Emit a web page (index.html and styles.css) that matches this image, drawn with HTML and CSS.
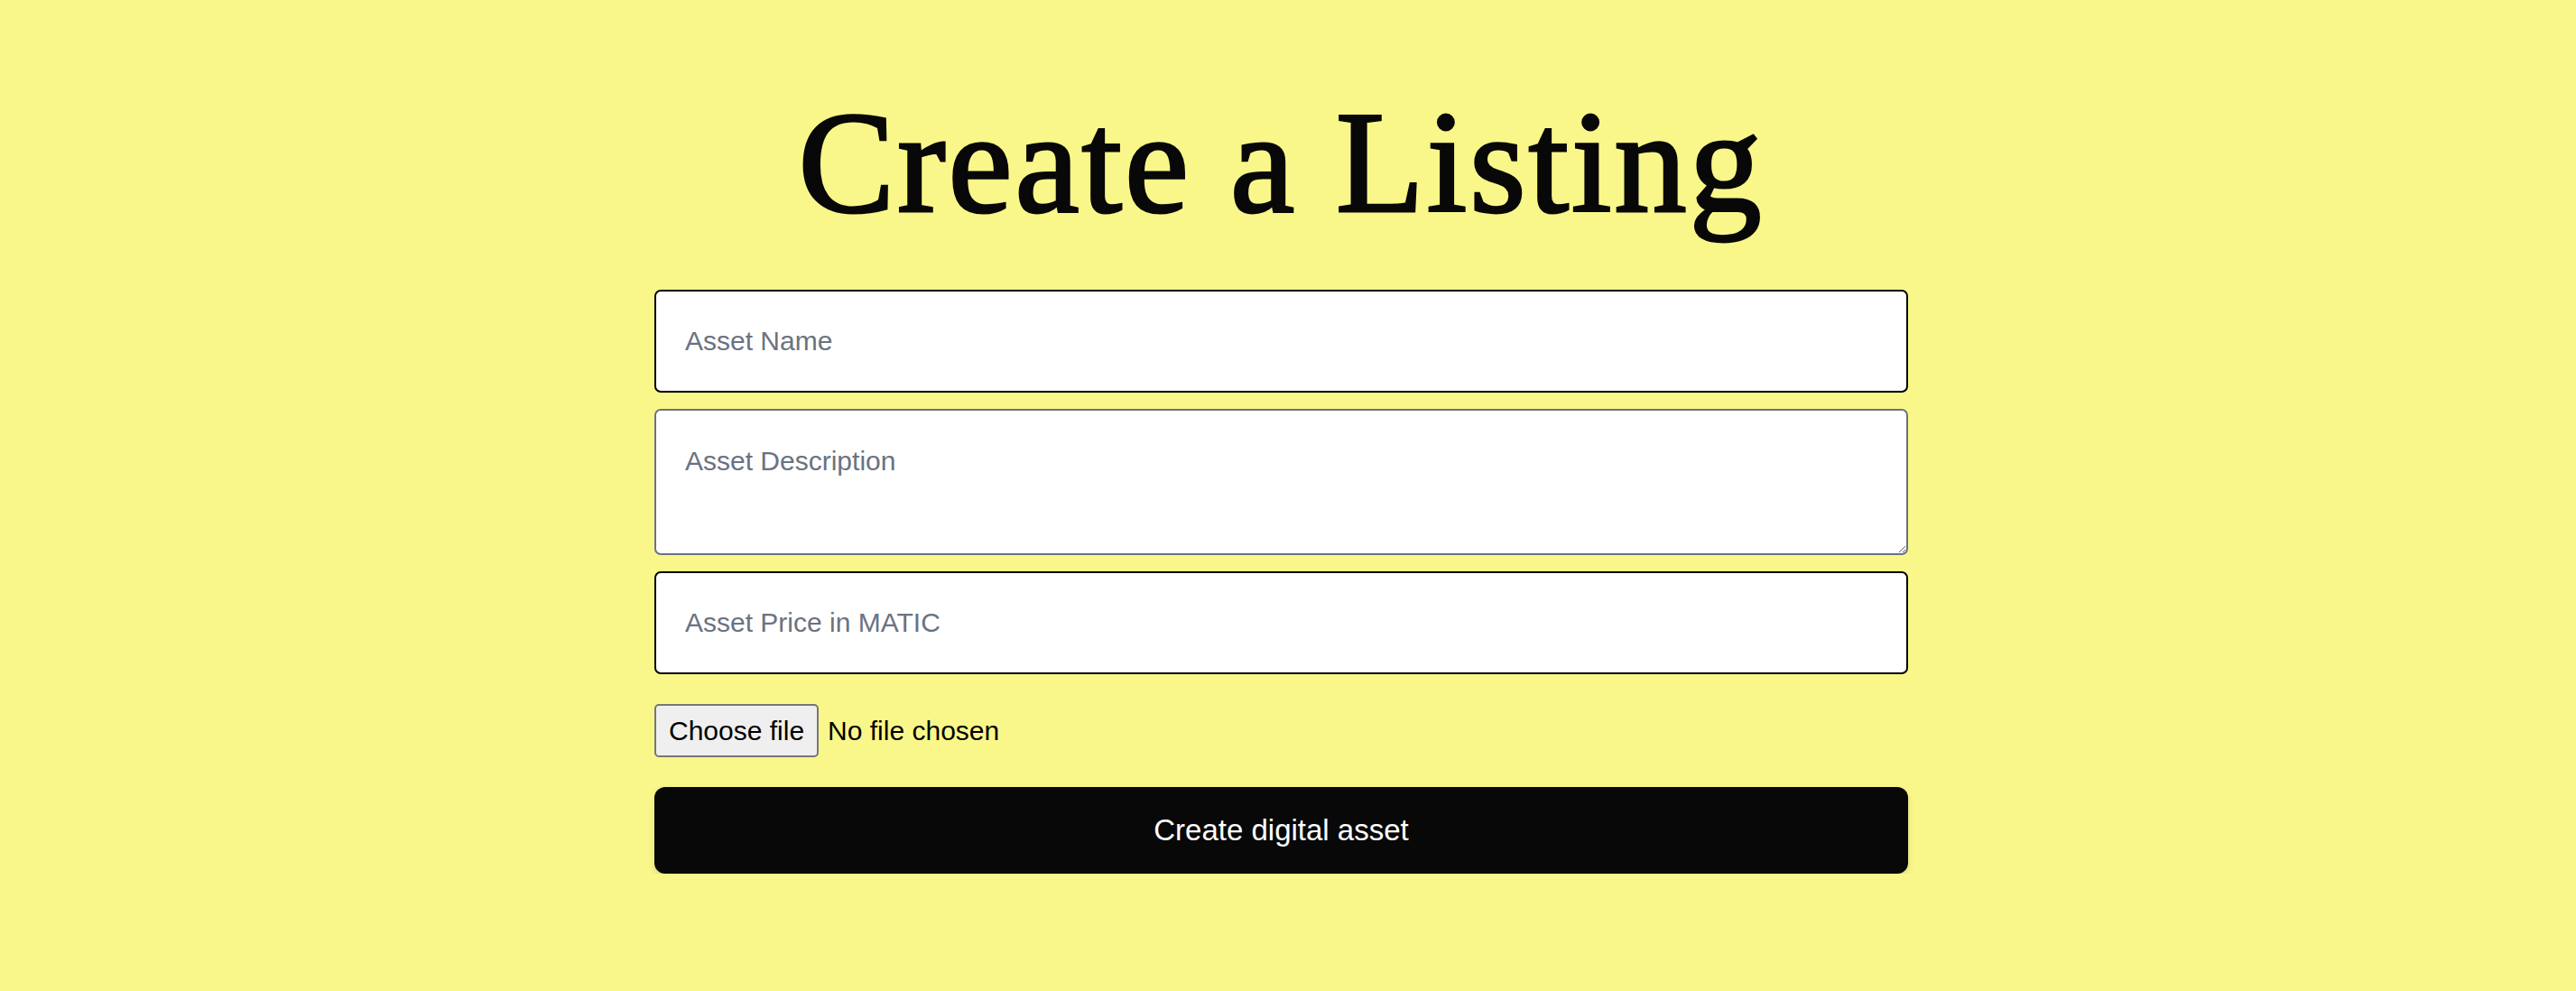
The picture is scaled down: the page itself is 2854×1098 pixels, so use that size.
FILE: index.html
```html
<!DOCTYPE html>
<html lang="en">
<head>
<meta charset="utf-8">
<title>Create a Listing</title>
<link rel="stylesheet" href="styles.css">
</head>
<body>
<main class="page">
  <h1 class="title">Create a Listing</h1>
  <form class="listing-form">
    <input class="field field-dark" type="text" placeholder="Asset Name">
    <textarea class="field field-area" placeholder="Asset Description"></textarea>
    <input class="field field-dark" type="text" placeholder="Asset Price in MATIC">
    <div class="file-row">
      <button type="button" class="file-btn">Choose file</button>
      <span class="file-label">No file chosen</span>
    </div>
    <button type="button" class="submit-btn">Create digital asset</button>
  </form>
</main>
</body>
</html>
```

FILE: styles.css
```css
html, body {
  margin: 0;
  padding: 0;
}

html {
  background: #f9f78a;
}

body {
  font-family: "Liberation Sans", Arial, sans-serif;
  color: #080808;
  padding-right: 15px;
}

.page {
  padding-top: 100px;
  display: flex;
  flex-direction: column;
  align-items: center;
}

.title {
  margin: 0;
  font-family: "Liberation Serif", "Times New Roman", serif;
  font-weight: 400;
  font-size: 160px;
  line-height: 160px;
  letter-spacing: 3px;
  color: #080808;
  -webkit-text-stroke: 3px #080808;
}

.listing-form {
  width: 1389px;
  margin-top: 61px;
  display: flex;
  flex-direction: column;
}

.field {
  box-sizing: border-box;
  width: 100%;
  background: #fff;
  border-radius: 7px;
  font-family: "Liberation Sans", Arial, sans-serif;
  font-size: 30px;
  color: #111;
  outline: none;
  margin: 0;
}

.field::placeholder {
  color: #6b7280;
  opacity: 1;
}

.field-dark {
  height: 114px;
  border: 2px solid #000;
  padding: 0 32px;
}

.field-area {
  height: 162px;
  border: 2px solid #6b7280;
  padding: 38px 32px 0;
  line-height: 36px;
  margin: 18px 0;
  resize: vertical;
  display: block;
}

.file-row {
  margin-top: 33px;
  display: flex;
  align-items: center;
  gap: 10px;
}

.file-btn {
  box-sizing: border-box;
  height: 59px;
  padding: 0 14px;
  background: #efefef;
  border: 2px solid #767676;
  border-radius: 5px;
  font-family: "Liberation Sans", Arial, sans-serif;
  font-size: 30px;
  color: #000;
  margin: 0;
}

.file-label {
  font-size: 30px;
  color: #000;
}

.submit-btn {
  margin-top: 33px;
  height: 96px;
  width: 100%;
  background: #080808;
  color: #fff;
  border: none;
  border-radius: 12px;
  font-family: "Liberation Sans", Arial, sans-serif;
  font-size: 33px;
  box-shadow: 0 4px 10px rgba(0, 0, 0, 0.08), 0 2px 4px rgba(0, 0, 0, 0.06);
}
```
